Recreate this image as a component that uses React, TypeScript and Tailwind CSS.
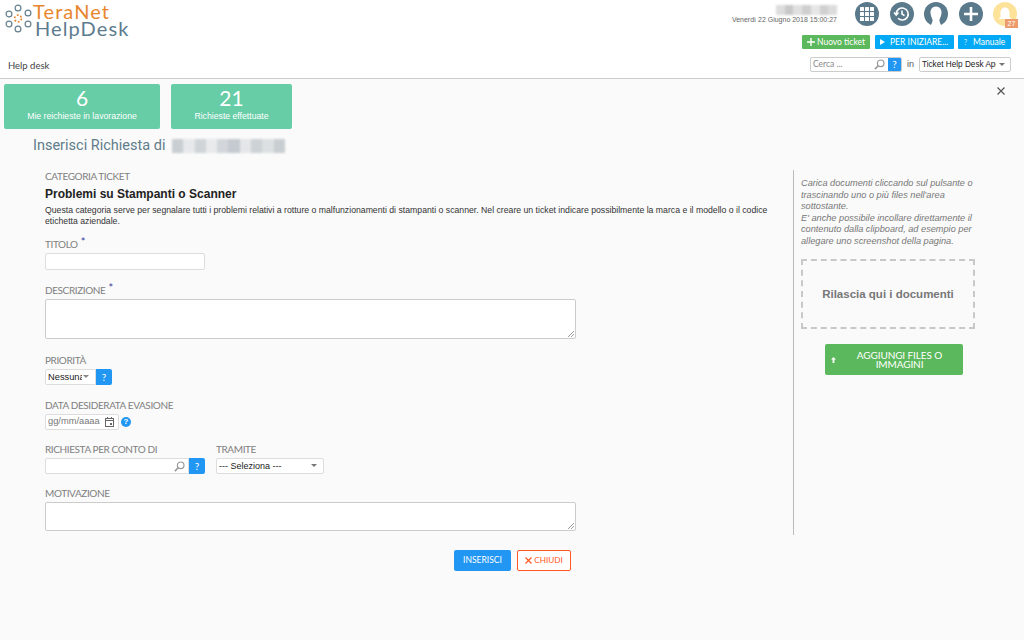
import React from "react";

const Blur = ({ w, h, shades }: { w: number; h: number; shades: string[] }) => (
  <span className="inline-flex shrink-0 blur-[1px]" style={{ width: w, height: h }}>
    {shades.map((c, i) => (
      <span key={i} className="flex-1 h-full" style={{ background: c }} />
    ))}
  </span>
);

const Label = ({ children, star }: { children: React.ReactNode; star?: boolean }) => (
  <div className="font-['Lato',sans-serif] text-[10px] tracking-[-0.4px] leading-[13px] text-[#808080]">
    {children}
    {star && <sup className="ml-[3px] top-[-2px] text-[11px] text-[#3b3b9e]">*</sup>}
  </div>
);

const HelpBtn = ({ className }: { className: string }) => (
  <div className={`flex items-center justify-center bg-[#2196f3] text-white text-[10px] font-['Lato',sans-serif] ${className}`}>?</div>
);

const Search = () => (
  <svg width="11" height="11" viewBox="0 0 12 12" fill="none" stroke="#999" strokeWidth="1.3">
    <circle cx="7.3" cy="4.7" r="3.6" />
    <path d="M4.6 7.4 1 11" strokeWidth="1.8" />
  </svg>
);

const Round = ({ children, bg = "bg-[#5a7a8c]" }: { children: React.ReactNode; bg?: string }) => (
  <div className={`relative w-[24px] h-[24px] rounded-full flex items-center justify-center ${bg}`}>{children}</div>
);

const Logo = () => (
  <svg width="28" height="30" viewBox="0 0 28 30" fill="none" stroke="#66808f" strokeWidth="1.2" className="mt-[3px] ml-[1px]">
    <circle cx="13" cy="4" r="2.900" />
    <circle cx="4" cy="10" r="2.900" />
    <circle cx="23" cy="9" r="2.900" />
    <circle cx="4" cy="20" r="2.900" />
    <circle cx="23" cy="20" r="2.900" />
    <circle cx="13" cy="25" r="2.900" />
    <circle cx="13" cy="14.500" r="3.400" stroke="#e8862e" strokeWidth="1.700" strokeDasharray="1.800 1.800" />
  </svg>
);

export default function App() {
  return (
    <div className="w-[1024px] h-[640px] overflow-hidden bg-[#fafafa] font-['Liberation_Sans',sans-serif] text-[#333]">
      {/* header */}
      <header className="h-[79px] bg-white border-b border-[#ccc] flex justify-between">
        <div className="flex flex-col justify-between pl-[4px]">
          <div className="flex pt-[1px]">
            <Logo />
            <div className="font-['Lato',sans-serif] text-[20px] leading-[17px]">
              <div className="text-[#e8862e] pt-[2px] tracking-[1.100px]">TeraNet</div>
              <div className="text-[#5d7c8e] ml-[2px] tracking-[1.100px]">HelpDesk</div>
            </div>
          </div>
          <div className="pl-[4px] pb-[6px] text-[#444] font-['Lato',sans-serif] text-[9.500px] leading-[13px]">Help desk</div>
        </div>
        <div className="flex flex-col items-end pr-[13px]">
          <div className="flex items-start pt-[2px] -mr-[6px]">
            <div className="flex flex-col items-end mr-[18px] pt-[3px]">
              <Blur w={61} h={10} shades={["#ddd", "#c8c8c8", "#e0e0e0", "#cfcfcf", "#e6e6e6", "#d0d0d0", "#dcdcdc"]} />
              <div className="text-[7px] leading-[9px] text-[#666]">Venerdì 22 Giugno 2018 15:00:27</div>
            </div>
            <div className="flex gap-[10.500px]">
              <Round>
                <div className="grid grid-cols-3 gap-[1.500px]">
                  {Array.from({ length: 9 }).map((_, i) => (
                    <span key={i} className="w-[3.500px] h-[3.500px] bg-white rounded-[0.5px]" />
                  ))}
                </div>
              </Round>
              <Round>
                <svg width="18" height="18" viewBox="0 0 18 18" fill="none" stroke="white" strokeWidth="1.600">
                  <path d="M3.200 9a6 6 0 1 1 1.800 4.300" />
                  <path d="M1 7.500 3.200 10l2.300-2.500" />
                  <path d="M9 5.500V9l2.500 1.700" />
                </svg>
              </Round>
              <Round>
                <svg width="24" height="24" viewBox="0 0 24 24">
                  <path d="M12 4.500c-3.900 0-5.700 3-5.500 6.500.2 3 1.400 5 2 6.500.4 1.200-.6 3.800-2 6.500h11c-1.400-2.700-2.400-5.300-2-6.500.6-1.500 1.800-3.500 2-6.500.2-3.500-1.600-6.500-5.500-6.500Z" fill="white" />
                </svg>
              </Round>
              <Round>
                <svg width="18" height="18" viewBox="0 0 18 18" stroke="white" strokeWidth="2.600">
                  <path d="M9 2v14M2 9h14" />
                </svg>
              </Round>
              <Round bg="bg-[#fde29a]">
                <svg width="16" height="17" viewBox="0 0 16 17" fill="white">
                  <path d="M8 1.500c3 0 4.500 2.400 4.500 5.500v4l2 2H1.500l2-2V7c0-3.100 1.500-5.500 4.500-5.500Z" />
                </svg>
                <span className="absolute right-[-1px] bottom-[-2px] w-[13px] h-[9px] bg-[#ee9b6c] text-white text-[7px] leading-[9px] text-center">27</span>
              </Round>
            </div>
          </div>
          <div className="flex mt-[9px] font-['Lato',sans-serif] text-[8.500px] text-white">
            <div className="h-[14px] w-[68px] mr-[5px] flex items-center justify-center gap-[2px] bg-[#5cb85c] rounded-[1px]">
              <svg width="8" height="8" viewBox="0 0 8 8" stroke="white" strokeWidth="1.400"><path d="M4 0v8M0 4h8" /></svg>
              Nuovo ticket
            </div>
            <div className="h-[14px] w-[79px] mr-[4px] flex items-center gap-[5px] pl-[5px] bg-[#03a9f4] rounded-[1px]">
              <span className="w-0 h-0 border-y-[3px] border-y-transparent border-l-[5px] border-l-white" />
              PER INIZIARE...
            </div>
            <div className="h-[14px] w-[53px] flex items-center gap-[4px] pl-[4px] bg-[#03a9f4] rounded-[1px] whitespace-nowrap">
              <span className="w-[7px] text-center text-[7px] text-[#d6ecff]">?</span>
              Manuale
            </div>
          </div>
          <div className="flex items-center mt-[8px]">
            <div className="w-[92px] h-[15px] flex border border-[#ccc] rounded-[2px] bg-white overflow-hidden">
              <div className="flex-1 flex items-center justify-between pl-[2px] pr-[3px] text-[8.500px] text-[#888] font-['Lato',sans-serif]">
                Cerca ...
                <Search />
              </div>
              <HelpBtn className="w-[13px]" />
            </div>
            <span className="mx-[5px] text-[9px] text-[#555]">in</span>
            <div className="relative w-[92px] h-[15px] border border-[#ccc] rounded-[2px] bg-white text-[8.200px] leading-[13px] text-[#222] pl-[2px] overflow-hidden whitespace-nowrap">
              <span className="block w-[74px] overflow-hidden">Ticket Help Desk Apertura</span>
              <span className="absolute right-[5px] top-[5px] w-0 h-0 border-x-[3px] border-x-transparent border-t-[3px] border-t-[#777]" />
            </div>
          </div>
        </div>
      </header>

      {/* stats */}
      <div className="flex justify-between pl-[4px] pr-[19px] pt-[5px]">
        <div className="flex gap-[11px] text-white font-['Lato',sans-serif]">
          <div className="w-[156px] h-[45px] bg-[#66cda6] rounded-[2px] flex flex-col items-center pt-[2px]">
            <div className="text-[21px] leading-[24px]">6</div>
            <div className="text-[8.700px] leading-[12px] font-['Liberation_Sans',sans-serif]">Mie reichieste in lavorazione</div>
          </div>
          <div className="w-[121px] h-[45px] bg-[#66cda6] rounded-[2px] flex flex-col items-center pt-[2px]">
            <div className="text-[21px] leading-[24px]">21</div>
            <div className="text-[8.700px] leading-[12px] font-['Liberation_Sans',sans-serif]">Richieste effettuate</div>
          </div>
        </div>
        <svg width="8" height="8" viewBox="0 0 8 8" stroke="#555" strokeWidth="1.200" className="mt-[3px]"><path d="M.5.500l7 7M7.500.500l-7 7" /></svg>
      </div>

      <div className="flex items-center pl-[33px] mt-[8px] h-[18px]">
        <span className="font-['Roboto',sans-serif] text-[14.500px] text-[#607d8b] w-[139px] shrink-0 whitespace-nowrap">Inserisci Richiesta di</span>
        <Blur w={113} h={14} shades={["#c8ced2", "#e6e8ea", "#cfd4d8", "#e8eaec", "#d2d6da", "#c4cad0", "#e4e6e8", "#ccd2d6", "#dde0e2", "#c8ced2"]} />
      </div>

      {/* main */}
      <div className="flex pl-[45px] mt-[15px]">
        <div className="w-[748px] h-[401px]">
          <Label>CATEGORIA TICKET</Label>
          <h3 className="mt-[4px] text-[12px] leading-[14px] font-bold text-[#222]">Problemi su Stampanti o Scanner</h3>
          <p className="mt-[4px] w-[730px] text-[8.700px] leading-[10.500px] text-[#333]">
            Questa categoria serve per segnalare tutti i problemi relativi a rotture o malfunzionamenti di stampanti o scanner. Nel creare un ticket indicare possibilmente la marca e il modello o il codice etichetta aziendale.
          </p>

          <div className="mt-[12px]"><Label star>TITOLO</Label></div>
          <div className="mt-[2px] w-[160px] h-[17px] bg-white border border-[#ddd] rounded-[2px]" />

          <div className="mt-[14px]"><Label star>DESCRIZIONE</Label></div>
          <div className="relative mt-[2px] w-[531px] h-[40px] bg-white border border-[#ccc] rounded-[2px]">
            <svg width="6" height="6" viewBox="0 0 6 6" stroke="#777" strokeWidth="0.700" className="absolute right-[1px] bottom-[1px]"><path d="M0 6l6-6M3 6l3-3" /></svg>
          </div>

          <div className="mt-[15px]"><Label>PRIORITÀ</Label></div>
          <div className="mt-[2px] flex h-[16px]">
            <div className="relative w-[51px] border border-[#ddd] bg-white text-[9.300px] leading-[14px] text-[#222] pl-[2px] rounded-l-[2px]">
              <span className="block w-[34px] overflow-hidden whitespace-nowrap">Nessuna</span>
              <span className="absolute right-[6px] top-[5px] w-0 h-0 border-x-[3px] border-x-transparent border-t-[3px] border-t-[#888]" />
            </div>
            <HelpBtn className="w-[16px] rounded-r-[2px]" />
          </div>

          <div className="mt-[14px]"><Label>DATA DESIDERATA EVASIONE</Label></div>
          <div className="mt-[2px] flex items-center h-[16px]">
            <div className="w-[74px] h-full flex items-center justify-between pl-[2px] pr-[4px] bg-white border border-[#ddd] rounded-[2px] text-[9.300px] text-[#777]">
              gg/mm/aaaa
              <svg width="9" height="10" viewBox="0 0 9 10" fill="none" stroke="#666" strokeWidth="1">
                <rect x=".5" y="1.500" width="8" height="8" />
                <path d="M0 3.500h9M2.500 0v2M6.500 0v2" />
                <rect x="5" y="6" width="2" height="2" fill="#666" stroke="none" />
              </svg>
            </div>
            <div className="ml-[2px] w-[10px] h-[10px] rounded-full bg-[#2196f3] text-white text-[8px] leading-[10px] text-center font-bold">?</div>
          </div>

          <div className="mt-[13px] flex gap-[11px]">
            <div>
              <Label>RICHIESTA PER CONTO DI</Label>
              <div className="mt-[2px] flex h-[16px] w-[160px]">
                <div className="flex-1 flex items-center justify-end pr-[3px] border border-[#ddd] bg-white rounded-l-[2px]"><Search /></div>
                <HelpBtn className="w-[16px] rounded-r-[2px]" />
              </div>
            </div>
            <div>
              <Label>TRAMITE</Label>
              <div className="relative mt-[2px] w-[108px] h-[16px] border border-[#ddd] bg-white rounded-[2px] text-[9px] leading-[14px] text-[#222] pl-[2px]">
                --- Seleziona ---
                <span className="absolute right-[6px] top-[5px] w-0 h-0 border-x-[3px] border-x-transparent border-t-[3px] border-t-[#777]" />
              </div>
            </div>
          </div>

          <div className="mt-[13px]"><Label>MOTIVAZIONE</Label></div>
          <div className="relative mt-[2px] w-[531px] h-[29px] bg-white border border-[#ccc] rounded-[2px]">
            <svg width="6" height="6" viewBox="0 0 6 6" stroke="#777" strokeWidth="0.700" className="absolute right-[1px] bottom-[1px]"><path d="M0 6l6-6M3 6l3-3" /></svg>
          </div>
        </div>

        <aside className="w-[182px] h-[365px] border-l border-[#bbb] pl-[7px] pt-[8px]">
          <p className="w-[176px] text-[9.200px] leading-[11.500px] italic text-[#777]">
            Carica documenti cliccando sul pulsante o trascinando uno o più files nell'area sottostante.
            <br />
            E' anche possibile incollare direttamente il contenuto dalla clipboard, ad esempio per allegare uno screenshot della pagina.
          </p>
          <div className="mt-[12px] w-[174px] h-[70px] pt-[1px] border-2 border-dashed border-[#c8c8c8] flex items-center justify-center text-[11.500px] font-bold text-[#777]">
            Rilascia qui i documenti
          </div>
          <div className="mt-[15px] ml-[24px] w-[138px] h-[31px] bg-[#5cb85c] rounded-[2px] flex items-center pl-[6px] text-white font-['Lato',sans-serif] text-[10px] tracking-[-0.1px] leading-[9px]">
            <svg width="5" height="6" viewBox="0 0 5 6" fill="white" className="shrink-0"><path d="M2.500 0 5 2.500H3.400V6H1.600V2.500H0Z" /></svg>
            <span className="flex-1 text-center pl-[4px] pr-[4px]">AGGIUNGI FILES O IMMAGINI</span>
          </div>
        </aside>
      </div>

      {/* actions */}
      <div className="flex gap-[6px] pl-[454px] -mt-[21px] font-['Lato',sans-serif] text-[8.500px]">
        <div className="w-[57px] h-[21px] flex items-center justify-center bg-[#2196f3] text-white rounded-[2px]">INSERISCI</div>
        <div className="w-[54px] h-[21px] flex items-center justify-center gap-[2px] bg-white border border-[#ff5722] text-[#ff5722] rounded-[2px] text-[8.200px]">
          <svg width="7" height="7" viewBox="0 0 7 7" stroke="#ff5722" strokeWidth="1.200"><path d="M.5.500l6 6M6.500.500l-6 6" /></svg>
          CHIUDI
        </div>
      </div>
    </div>
  );
}
